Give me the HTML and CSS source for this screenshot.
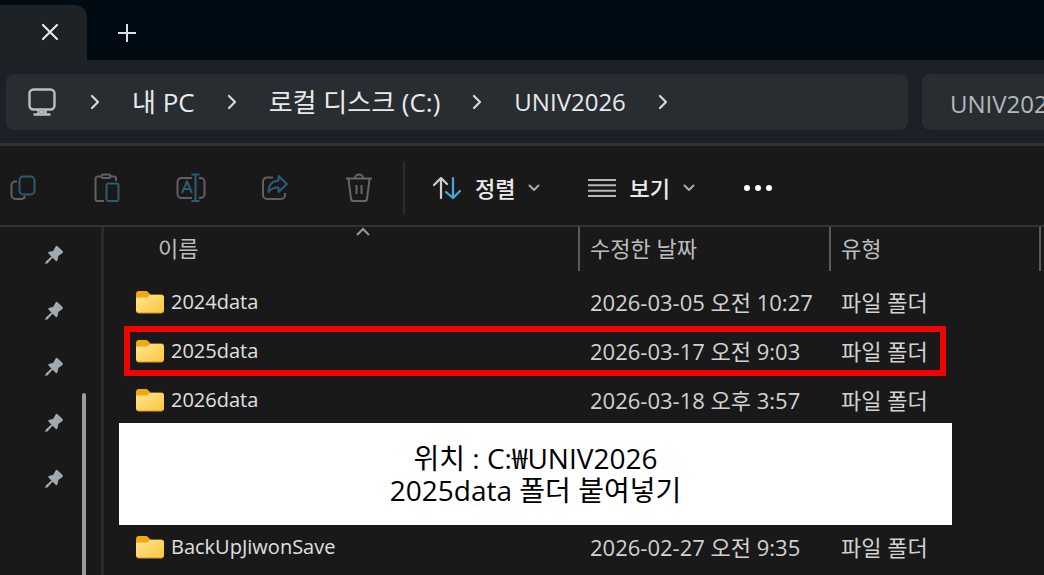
FILE: index.html
```html
<!DOCTYPE html>
<html lang="ko">
<head>
<meta charset="utf-8">
<title>UNIV2026</title>
<link rel="stylesheet" href="styles.css">
</head>
<body>
<svg class="defs" aria-hidden="true">
  <defs>
    <linearGradient id="folder-front" x1="0" y1="0" x2="1" y2="1">
      <stop offset="0" stop-color="#ffe694"/>
      <stop offset="1" stop-color="#fbc63c"/>
    </linearGradient>
    <symbol id="folder" viewBox="0 0 30 24">
      <path d="M1 4a3 3 0 0 1 3-3h7a3 3 0 0 1 2 1l2.500 2.500H26a3 3 0 0 1 3 3V14H1z" fill="#f0a90f"/>
      <path d="M1 8.500a2 2 0 0 1 2-1h8.500a3 3 0 0 0 2-1l1.500-1.500h11a3 3 0 0 1 3 3v12.500a2.500 2.500 0 0 1-2.500 2.500h-23A2.500 2.500 0 0 1 1 20.500z" fill="url(#folder-front)"/>
      <path d="M1.500 21a2.500 2.500 0 0 0 2 2h23a2.500 2.500 0 0 0 2-2" fill="none" stroke="#d9962a"/>
    </symbol>
    <symbol id="pin" viewBox="0 0 20 20">
      <path d="M11.800 1.200q1-.8 2 .2l4.700 4.700q1 1 0 2l-4.200 2.900-.8 4.200q-.6 1.700-1.900.5l-3-3-4.900 5.600-2.500.6.600-2.500 5.600-4.900-2.700-2.800q-1.200-1.400.4-1.900l4-.8z" fill="#a0a9b0"/>
    </symbol>
    <symbol id="chevron" viewBox="0 0 10 16">
      <path d="M2 2l6 6-6 6" fill="none" stroke="#d5d9dc" stroke-width="2.200" stroke-linecap="round" stroke-linejoin="round"/>
    </symbol>
    <symbol id="caret" viewBox="0 0 12 8">
      <path d="M1.500 1.500L6 6l4.500-4.500" fill="none" stroke="#aaa" stroke-width="2" stroke-linecap="round" stroke-linejoin="round"/>
    </symbol>
  </defs>
</svg>

<header class="titlebar">
  <div class="tab">
    <button class="tab-close" aria-label="탭 닫기"><svg width="20" height="20" viewBox="0 0 20 20"><path d="M3 3l14 14M17 3L3 17" stroke="#e4e6e8" stroke-width="2.200" stroke-linecap="round"/></svg></button>
  </div>
  <button class="tab-new" aria-label="새 탭"><svg width="20" height="20" viewBox="0 0 20 20"><path d="M10 1v18M1 10h18" stroke="#dde0e2" stroke-width="2"/></svg></button>
</header>

<div class="address-row">
  <nav class="address" aria-label="주소">
    <svg class="monitor" width="28" height="28" viewBox="0 0 28 28" fill="none" stroke="#b9bfc3" stroke-width="2.400"><rect x="1.500" y="1.500" width="25" height="20" rx="4"/><path d="M10.500 22v4M17.500 22v4M6.500 26.500h15" stroke-linecap="round"/><path d="M12 24h4" /></svg>
    <svg class="chevron" width="10" height="16"><use href="#chevron"/></svg>
    <a class="crumb crumb-ko" href="#">내 PC</a>
    <svg class="chevron" width="10" height="16"><use href="#chevron"/></svg>
    <a class="crumb crumb-ko" href="#">로컬 디스크 (C:)</a>
    <svg class="chevron" width="10" height="16"><use href="#chevron"/></svg>
    <a class="crumb" href="#">UNIV2026</a>
    <svg class="chevron" width="10" height="16"><use href="#chevron"/></svg>
  </nav>
  <input class="search" type="text" aria-label="검색" value="UNIV2026 검색">
</div>

<div class="toolbar">
  <div class="icon-tools">
    <button aria-label="복사"><svg width="30" height="30" viewBox="0 0 30 30" fill="none" stroke-width="2"><path d="M9 8.500H7.500a4 4 0 0 0-4 4V22a4 4 0 0 0 4 4H13q3.500 0 4-3" stroke="#606060"/><rect x="11.500" y="3.500" width="15" height="18" rx="4" stroke="#2d5b75"/></svg></button>
    <button aria-label="붙여넣기"><svg width="30" height="30" viewBox="0 0 30 30" fill="none" stroke-width="2"><path d="M9 3.500H5.500a2 2 0 0 0-2 2V26a2 2 0 0 0 2 2H12M19 3.500h3a2 2 0 0 1 2 2V8" stroke="#606060"/><rect x="9.500" y="1.500" width="9" height="3.500" rx="1.700" stroke="#606060"/><rect x="14.500" y="10.500" width="12" height="17.500" rx="2" stroke="#2d5b75"/></svg></button>
    <button aria-label="이름 바꾸기"><svg width="30" height="30" viewBox="0 0 30 30" fill="none" stroke-width="2"><path d="M16 5H5.500a4 4 0 0 0-4 4v12a4 4 0 0 0 4 4H16M23 5h1.500a4 4 0 0 1 4 4v12a4 4 0 0 1-4 4H23" stroke="#606060"/><path d="M6 20l5-11.500L16 20M8 16h6M19.500 2v26M15.500 1.500h8M15.500 28h8" stroke="#2d5b75"/></svg></button>
    <button aria-label="공유"><svg width="30" height="30" viewBox="0 0 30 30" fill="none" stroke-width="2" stroke-linejoin="round"><path d="M13 4.500H7a4 4 0 0 0-4 4V22a4 4 0 0 0 4 4h14a4 4 0 0 0 4-4v-2" stroke="#606060"/><path d="M18.500 3l8.500 8-8.500 8v-4.500q-6-.5-10 4.500 0-10.500 10-11.500z" stroke="#2d5b75"/></svg></button>
    <button aria-label="삭제"><svg width="30" height="30" viewBox="0 0 30 30" fill="none" stroke="#666" stroke-width="2"><path d="M2 5.500h26M11 5a4 3.500 0 0 1 8 0M4.500 6l2.500 20q.3 2 2.500 2h11q2.200 0 2.500-2l2.500-20M12.500 12v9M17.500 12v9"/></svg></button>
  </div>
  <div class="menu-tools">
    <button class="menu-sort"><svg width="30" height="24" viewBox="0 0 30 24" fill="none" stroke-width="2.200" stroke-linecap="round" stroke-linejoin="round"><path d="M9 22V2M2 9l7-7 6 6" stroke="#cfcfcf"/><path d="M21 2v20M14 16l7 6 7-7" stroke="#4aa7dc"/></svg><span>정렬</span><svg width="12" height="8"><use href="#caret"/></svg></button>
    <button class="menu-view"><svg width="28" height="20" viewBox="0 0 28 20"><path d="M0 2h28M0 7.300h28M0 12.700h28M0 18h28" stroke="#b8b8b8" stroke-width="2"/></svg><span>보기</span><svg width="12" height="8"><use href="#caret"/></svg></button>
    <button class="menu-more" aria-label="자세히 보기"><svg width="30" height="8" viewBox="0 0 30 8" fill="#fff"><circle cx="4" cy="4" r="3"/><circle cx="15" cy="4" r="3"/><circle cx="26" cy="4" r="3"/></svg></button>
  </div>
</div>

<div class="body">
  <aside class="sidebar">
    <div class="pins">
      <svg width="20" height="20"><use href="#pin"/></svg>
      <svg width="20" height="20"><use href="#pin"/></svg>
      <svg width="20" height="20"><use href="#pin"/></svg>
      <svg width="20" height="20"><use href="#pin"/></svg>
      <svg width="20" height="20"><use href="#pin"/></svg>
    </div>
    <div class="scrollbar"></div>
  </aside>
  <main class="list">
    <svg class="sort-mark" width="16" height="10" viewBox="0 0 16 10"><path d="M2 8l6-6 6 6" fill="none" stroke="#999" stroke-width="2"/></svg>
    <table class="files">
      <colgroup><col class="col-name"><col class="col-date"><col class="col-type"><col></colgroup>
      <thead>
        <tr><th><span>이름</span></th><th><span>수정한 날짜</span></th><th><span>유형</span></th><th><span></span></th></tr>
      </thead>
      <tbody>
        <tr><td><div class="file"><svg width="30" height="24"><use href="#folder"/></svg>2024data</div></td><td>2026-03-05 오전 10:27</td><td>파일 폴더</td><td></td></tr>
        <tr><td><div class="file"><svg width="30" height="24"><use href="#folder"/></svg>2025data</div></td><td>2026-03-17 오전 9:03</td><td>파일 폴더</td><td></td></tr>
        <tr><td><div class="file"><svg width="30" height="24"><use href="#folder"/></svg>2026data</div></td><td>2026-03-18 오후 3:57</td><td>파일 폴더</td><td></td></tr>
        <tr class="covered"><td colspan="4"></td></tr>
        <tr><td><div class="file"><svg width="30" height="24"><use href="#folder"/></svg>BackUpJiwonSave</div></td><td>2026-02-27 오전 9:35</td><td>파일 폴더</td><td></td></tr>
      </tbody>
    </table>
    <div class="highlight"></div>
    <p class="note">위치 : C:₩UNIV2026<br>2025data 폴더 붙여넣기</p>
  </main>
</div>
</body>
</html>
```
FILE: styles.css
```css
* { box-sizing: border-box; }

body {
  margin: 0;
  min-height: 100vh;
  display: flex;
  flex-direction: column;
  overflow: hidden;
  background: #191919;
  color: #d2d2d2;
  font-family: "Open Sans", "Noto Sans CJK KR", sans-serif;
  font-size: 22px;
}

button {
  display: flex;
  align-items: center;
  padding: 0;
  border: 0;
  background: none;
  color: inherit;
  font: inherit;
}

svg { display: block; flex: none; }
.defs { position: absolute; width: 0; height: 0; }

.titlebar {
  display: flex;
  height: 60px;
  padding-top: 5px;
  background: #010b13;
}
.tab {
  display: flex;
  justify-content: flex-end;
  width: 87px;
  padding: 0 27px 0 0;
  border-radius: 0 12px 0 0;
  background: #1d2227;
}
.tab-close { height: 54px; }
.tab-new { height: 56px; margin-left: 30px; }

.address-row {
  display: flex;
  gap: 14px;
  padding: 14px 0 13px 6px;
  background: #1b2127;
  border-bottom: 3px solid #323232;
}
.address {
  flex: 1;
  display: flex;
  align-items: center;
  height: 56px;
  padding-left: 22px;
  border-radius: 8px;
  background: #272d31;
}
.monitor { margin-right: 34px; }
.crumb {
  margin: 0 32px;
  color: #e8eaec;
  font-size: 24px;
  line-height: 32px;
  text-decoration: none;
  white-space: nowrap;
}
.crumb-ko { font-size: 26px; }
.search {
  width: 122px;
  height: 56px;
  padding: 0 0 0 28px;
  border: 0;
  border-radius: 8px 0 0 8px;
  background: #272d31;
  color: #b4b8bb;
  font: inherit;
  font-size: 24px;
  outline: 0;
}

.toolbar {
  display: flex;
  align-items: center;
  height: 81px;
  padding-top: 4px;
  border-bottom: 2px solid #333;
}
.icon-tools {
  display: flex;
  align-items: center;
  gap: 54px;
  height: 54px;
  width: 405px;
  padding-left: 8px;
  border-right: 2px solid #2c2c2c;
}
.menu-tools {
  display: flex;
  align-items: center;
  gap: 48px;
  padding-left: 27px;
  color: #ececec;
  font-weight: 500;
}
.menu-tools button { gap: 13px; line-height: 32px; }

.body { flex: 1; display: flex; }
.sidebar {
  display: flex;
  gap: 18px;
  width: 104px;
  padding-left: 44px;
  border-right: 3px solid #2a2a2a;
}
.pins {
  display: flex;
  flex-direction: column;
  gap: 36px;
  padding-top: 18px;
}
.scrollbar {
  width: 4px;
  margin-top: 166px;
  border-radius: 2px 2px 0 0;
  background: #9c9c9c;
}

.list { position: relative; flex: 1; min-width: 0; }
.files {
  width: 100%;
  table-layout: fixed;
  border-collapse: collapse;
}
.col-name { width: 474px; }
.col-date { width: 251px; }
.col-type { width: 210px; }
.files th {
  height: 50px;
  padding: 0;
  font-weight: 400;
  text-align: left;
  vertical-align: top;
  color: #bdbdbd;
}
.files th span {
  display: block;
  height: 44px;
  padding-left: 10px;
  line-height: 42px;
  border-left: 2px solid #5a5a5a;
}
.files th:first-child span { padding-left: 54px; border-left: 0; }
.files td {
  height: 49px;
  padding: 0 0 0 12px;
  line-height: 32px;
  white-space: nowrap;
}
.files td:first-child { padding-left: 31px; }
.files .covered td { height: 98px; }
.file {
  display: flex;
  align-items: center;
  gap: 6px;
  color: #e0e0e0;
  font-size: 20px;
}

/* Marks that lie over the file list */
.sort-mark { position: absolute; top: 0; left: 251px; }
.highlight {
  position: absolute;
  top: 99px;
  left: 20px;
  right: 98px;
  height: 50px;
  border: 6px solid #f00404;
}
.note {
  position: absolute;
  top: 196px;
  left: 15px;
  right: 92px;
  margin: 0;
  padding: 19px 0;
  background: #fff;
  color: #000;
  font-size: 28px;
  line-height: 32px;
  text-align: center;
}
```
